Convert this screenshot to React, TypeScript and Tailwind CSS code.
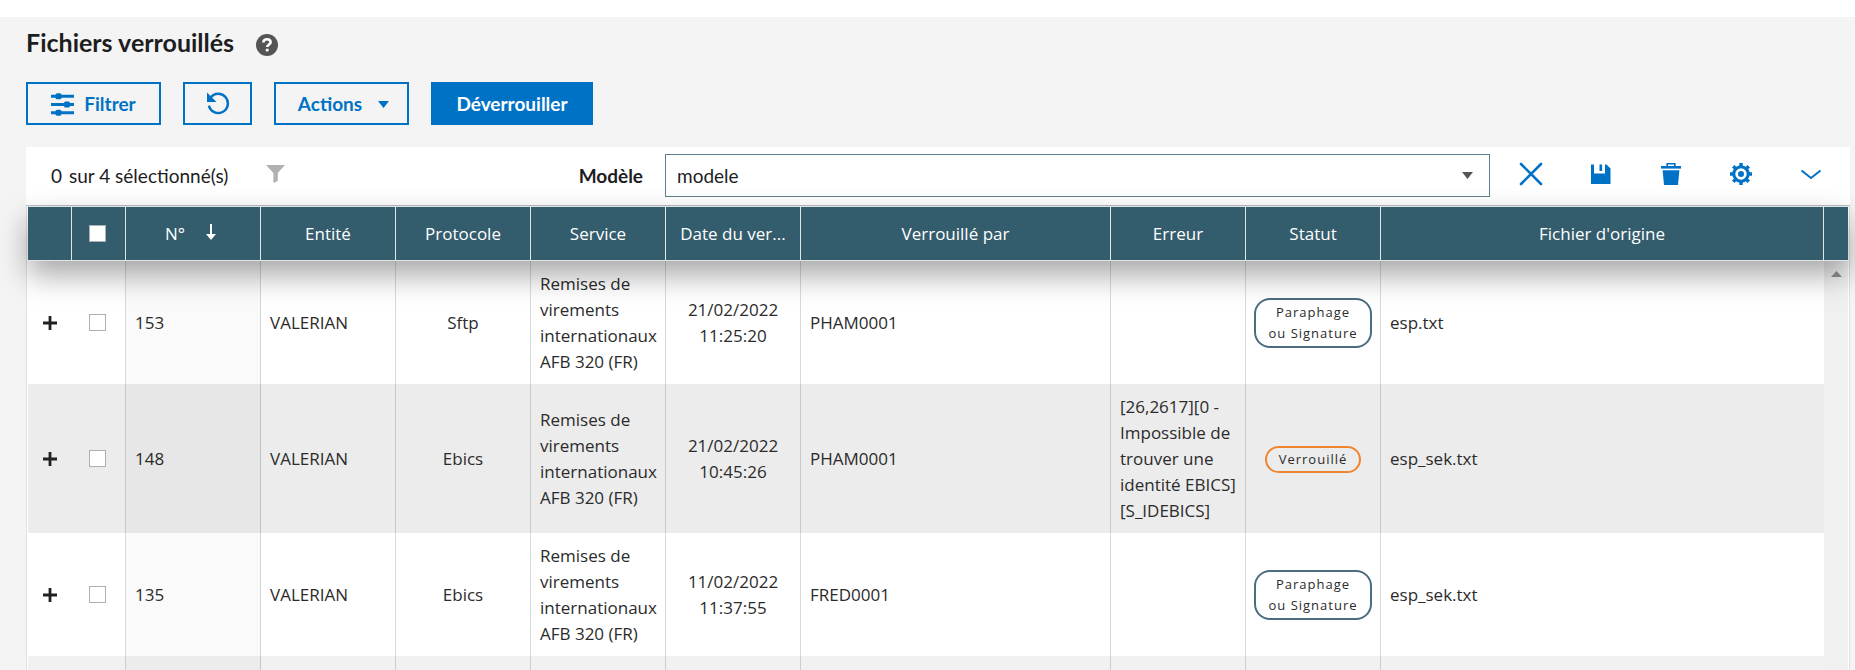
import React, { useState } from 'react';

const rows = [
  { id: '153', entity: 'VALERIAN', protocol: 'Sftp', service: 'Remises de virements internationaux AFB 320 (FR)', day: '21/02/2022', time: '11:25:20', lockedBy: 'PHAM0001', error: '', status: 'sign', file: 'esp.txt' },
  { id: '148', entity: 'VALERIAN', protocol: 'Ebics', service: 'Remises de virements internationaux AFB 320 (FR)', day: '21/02/2022', time: '10:45:26', lockedBy: 'PHAM0001', error: '[26,2617][0 - Impossible de trouver une identité EBICS] [S_IDEBICS]', status: 'locked', file: 'esp_sek.txt' },
  { id: '135', entity: 'VALERIAN', protocol: 'Ebics', service: 'Remises de virements internationaux AFB 320 (FR)', day: '11/02/2022', time: '11:37:55', lockedBy: 'FRED0001', error: '', status: 'sign', file: 'esp_sek.txt' }
];

const th = 'h-[55px] border-y border-r border-[#dfe5e8] px-2 font-normal whitespace-nowrap';
const td = 'border-r border-black/15 px-[9px] py-[9px] align-middle';
const outline = 'flex h-[43px] items-center justify-center border-2 border-[#0072c6] pt-[2px] text-[19px] font-bold text-[#0072c6]';
const box = 'block size-[17px] appearance-none border border-[#a9b1b8] bg-white checked:bg-[#0072c6]';

const Status = ({ kind }: { kind: string }) => kind === 'sign'
  ? <span className="inline-block rounded-[16px] border-2 border-[#4b6d80] px-3 py-[2px] text-[13px] leading-[21px] font-medium tracking-[1px] whitespace-nowrap">Paraphage<br />ou Signature</span>
  : <span className="inline-block rounded-[16px] border-2 border-[#f08530] px-3 py-px text-[13px] leading-[21px] font-medium tracking-[1px]">Verrouillé</span>;

const App = () => {
  const [selected, setSelected] = useState<string[]>([]);
  const toggle = (id: string) => setSelected(selected.includes(id) ? selected.filter(s => s !== id) : [...selected, id]);

  return <div className="h-screen overflow-hidden bg-white pt-[17px] font-['Lato',sans-serif] text-[#1d1d1f]">
    <main className="min-h-full bg-[#f4f4f4] pl-[26px] pr-[5px]">
      {/* Title */}
      <div className="flex items-center gap-[22px] pt-2">
        <h1 className="text-[25px] leading-[34px] font-bold">Fichiers verrouillés</h1>
        <button aria-label="Aide" className="mt-[6px]">
          <svg className="block size-[22px]" viewBox="0 0 22 22">
            <circle cx="11" cy="11" r="11" fill="#555" />
            <path d="M7.4 8.4C7.4 6.2 9 5.2 11 5.2s3.6 1.1 3.6 3c0 2.4-3.4 2.4-3.4 4.8" fill="none" stroke="#fff" strokeWidth="2.6" />
            <path d="M9.8 14.8h2.8v2.6H9.8z" fill="#fff" />
          </svg>
        </button>
      </div>
      {/* Actions */}
      <div className="mt-[23px] flex gap-[22px]">
        <button className={`${outline} w-[135px] gap-[10px]`}>
          <svg className="h-[23px] w-[23px]" viewBox="0 0 23 23" fill="#0072c6">
            <path d="M0 1.8h23v3H0zM0 10h23v3H0zM0 18.2h23v3H0z" />
            <rect x="4.5" y="0.3" width="6" height="6" rx="1.6" />
            <rect x="13" y="8.5" width="6" height="6" rx="1.6" />
            <rect x="4.5" y="16.7" width="6" height="6" rx="1.6" />
          </svg>
          Filtrer
        </button>
        <button className={`${outline} w-[69px] pb-1`} aria-label="Rafraîchir">
          <svg className="h-[24px] w-[24px]" viewBox="0 0 24 24">
            <path d="M4.6 6.6A9.6 9.6 0 1 1 2.9 14.6" fill="none" stroke="#0072c6" strokeWidth="2.5" />
            <path d="M1 1.5v9.5h9.5z" fill="#0072c6" />
          </svg>
        </button>
        <button className={`${outline} w-[135px] gap-4 pl-1`}>
          Actions
          <svg className="h-[7px] w-[11px]" viewBox="0 0 11 7"><path d="M0 0h11L5.5 7z" fill="#0072c6" /></svg>
        </button>
        <button className="h-[43px] w-[162px] bg-[#0072c6] pt-[2px] text-[19px] font-bold text-white">Déverrouiller</button>
      </div>
      {/* Toolbar */}
      <div className="mt-[22px] flex h-[58px] items-center bg-white pb-[2px] pl-[25px] text-[19px]">
        <span className="pt-[2px]"><span className="mr-[7px]">{selected.length}</span>sur 4 sélectionné(s)</span>
        <svg className="mb-[2px] ml-[38px] h-[18px] w-[19px]" viewBox="0 0 19 18"><path d="M0 0h19l-7.2 8V16l-4.4 2V8z" fill="#b1b1b1" /></svg>
        <label htmlFor="model" className="ml-auto pt-[2px] font-bold">Modèle</label>
        <div className="relative ml-[22px] w-[46%] max-w-[825px]">
          <select id="model" className="block h-[43px] w-full appearance-none border border-[#5f7f8c] bg-white px-[11px] pt-[2px]">
            <option>modele</option>
          </select>
          <svg className="pointer-events-none absolute top-[18px] right-[17px] h-[7px] w-[11px]" viewBox="0 0 11 7"><path d="M0 0h11L5.5 7z" fill="#555" /></svg>
        </div>
        <div className="flex gap-[46px] pr-[27px] pb-[2px] pl-[29px]">
          <button aria-label="Effacer">
            <svg className="block size-6" viewBox="0 0 24 24"><path d="M2 2l20 20M22 2L2 22" stroke="#0072c6" strokeWidth="2.6" strokeLinecap="round" /></svg>
          </button>
          <button aria-label="Enregistrer">
            <svg className="block size-6" viewBox="0 0 24 24" fill="#0072c6"><path d="M2 2.5h3v9h11v-9h1.5l4 4V22H2z" /><path d="M10.5 2.5h2.6V9h-2.6z" /></svg>
          </button>
          <button aria-label="Supprimer">
            <svg className="block size-6" viewBox="0 0 24 24" fill="#0072c6"><path d="M2 4h20v2.6H2z" /><path d="M8.2 4.5V1.8h7.6v2.7" fill="none" stroke="#0072c6" strokeWidth="1.6" /><path d="M3.6 8.3h16.8L19 23H5z" /></svg>
          </button>
          <button aria-label="Paramètres">
            <svg className="block size-6" viewBox="0 0 24 24" fill="none" stroke="#0072c6">
              <circle cx="12" cy="12" r="7.2" strokeWidth="3" />
              <circle cx="12" cy="12" r="3" fill="#0072c6" stroke="none" />
              <path d="M12 1v3M12 20v3M1 12h3M20 12h3M4.2 4.2l2.2 2.2M17.6 17.6l2.2 2.2M4.2 19.8l2.2-2.2M17.6 6.4l2.2-2.2" strokeWidth="3.4" />
            </svg>
          </button>
          <button aria-label="Déplier">
            <svg className="block size-6" viewBox="0 0 24 24"><path d="M2.5 8.5L12 16l9.5-7.5" fill="none" stroke="#0072c6" strokeWidth="2" /></svg>
          </button>
        </div>
      </div>
      {/* Files */}
      <div className="border-x border-t border-x-[#e0e0e0] border-t-[#b9bfc1] bg-white px-px font-['Open_Sans','Noto_Sans',sans-serif]">
        <table className="w-full table-fixed border-separate border-spacing-0 text-[17px] leading-[26px]">
          <colgroup>
            <col className="w-[44px]" />
            <col className="w-[54px]" />
            <col className="w-[135px]" />
            <col className="w-[135px]" />
            <col className="w-[135px]" />
            <col className="w-[135px]" />
            <col className="w-[135px]" />
            <col className="w-[310px]" />
            <col className="w-[135px]" />
            <col className="w-[135px]" />
            <col />
            <col className="w-[24px]" />
          </colgroup>
          <thead className="relative z-10 bg-[#335c6c] text-white shadow-[0_14px_30px_rgba(0,0,0,0.35)]">
            <tr>
              <th className={th}></th>
              <th className={`${th} pr-[10px]`}><input type="checkbox" aria-label="Tout sélectionner" className={`${box} mx-auto`} /></th>
              <th className={th}>
                <span className="flex items-center justify-center gap-[21px] pr-[5px]">
                  N°
                  <svg className="mb-1 h-[16px] w-[10px]" viewBox="0 0 10 16" fill="#fff"><path d="M4 0h2v10h4l-5 6-5-6h4z" /></svg>
                </span>
              </th>
              <th className={th}>Entité</th>
              <th className={th}>Protocole</th>
              <th className={th}>Service</th>
              <th className={th}>Date du ver...</th>
              <th className={th}>Verrouillé par</th>
              <th className={th}>Erreur</th>
              <th className={th}>Statut</th>
              <th className={th}>Fichier d'origine</th>
              <th className="border-y border-[#dfe5e8]"></th>
            </tr>
          </thead>
          <tbody className="text-[#2b2b2b]">
            {rows.map((row, i) => <tr key={row.id} className="even:bg-[#ececec]">
              <td className="align-middle">
                <button aria-label="Détails" className="mx-auto block">
                  <svg className="block size-[14px]" viewBox="0 0 14 14"><path d="M0 7h14M7 0v14" stroke="#222" strokeWidth="2.8" /></svg>
                </button>
              </td>
              <td className="border-r border-black/15 pr-[3px] align-middle">
                <input type="checkbox" aria-label={`Sélectionner ${row.id}`} className={`${box} mx-auto`} checked={selected.includes(row.id)} onChange={() => toggle(row.id)} />
              </td>
              <td className={`${td} bg-black/2`}>{row.id}</td>
              <td className={td}>{row.entity}</td>
              <td className={`${td} text-center`}>{row.protocol}</td>
              <td className={`${td} pt-[10px]`}>{row.service}</td>
              <td className={`${td} text-center`}>{row.day}<br />{row.time}</td>
              <td className={td}>{row.lockedBy}</td>
              <td className={`${td} pt-[10px]`}>{row.error}</td>
              <td className="border-r border-black/15 text-center align-middle"><Status kind={row.status} /></td>
              <td className="px-[9px] align-middle">{row.file}</td>
              {i === 0 && <td rowSpan={4} className="bg-[#f0f0f0] pt-[10px] align-top">
                <svg className="mx-auto h-[6px] w-[11px]" viewBox="0 0 11 6"><path d="M0 6h11L5.5 0z" fill="#8f8f8f" /></svg>
              </td>}
            </tr>)}
            <tr className="h-[123px] bg-[#f1f1f1]">
              <td></td>
              <td className="border-r border-black/15"></td>
              <td className={`${td} bg-black/2`}></td>
              <td className={td}></td>
              <td className={td}></td>
              <td className={td}></td>
              <td className={td}></td>
              <td className={td}></td>
              <td className={td}></td>
              <td className={td}></td>
              <td></td>
            </tr>
          </tbody>
        </table>
      </div>
    </main>
  </div>;
};
export default App;
